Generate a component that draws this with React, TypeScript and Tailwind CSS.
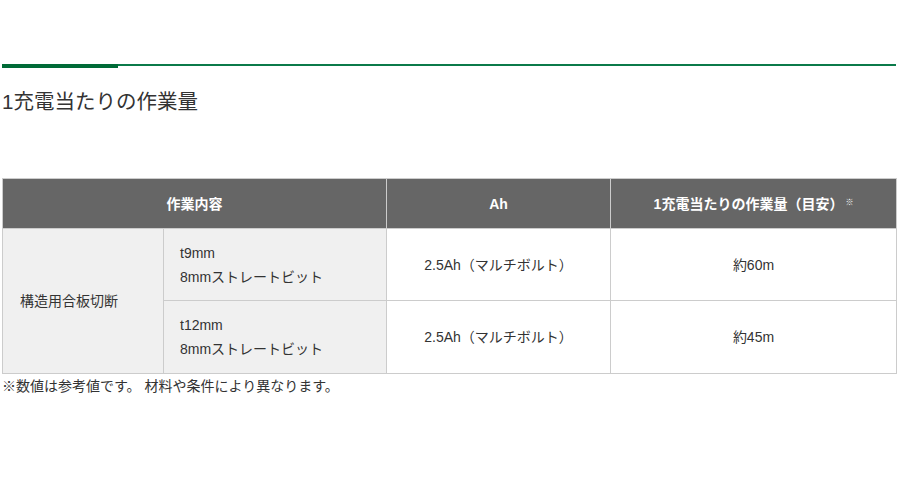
const font = {
  fontFamily: '"Liberation Sans", "Noto Sans CJK JP", sans-serif',
};

export default function App() {
  return (
    <div
      className="h-[483px] w-[900px] bg-white pl-[2px] pr-[4px] pt-[64px] text-[#333]"
      style={font}
    >
      <div className="relative h-[4px]">
        <div className="h-[2px] w-full bg-[#0b7a4a]" />
        <div className="absolute left-0 top-0 h-[4px] w-[116px] bg-[#006b37]" />
      </div>

      <h2 className="mt-[18px] text-[20.5px] leading-[32px] font-normal text-[#333]">
        1充電当たりの作業量
      </h2>

      <table className="mt-[60px] w-[895px] border-collapse text-[14px] leading-[24px]">
        <thead>
          <tr className="h-[50px] bg-[#666] text-white">
            <th colSpan={2} className="border border-[#ccc] font-bold">
              作業内容
            </th>
            <th className="w-[224px] border border-[#ccc] font-bold">Ah</th>
            <th className="w-[286px] border border-[#ccc] font-bold">
              1充電当たりの作業量（目安）
              <sup className="ml-[2px] text-[8px] font-normal">※</sup>
            </th>
          </tr>
        </thead>
        <tbody>
          <tr className="h-[72px]">
            <td
              rowSpan={2}
              className="w-[161px] border border-[#ccc] bg-[#f0f0f0] pl-[17px] text-left"
            >
              構造用合板切断
            </td>
            <td className="w-[223px] border border-[#ccc] bg-[#f0f0f0] pl-[16px] text-left">
              t9mm
              <br />
              8mmストレートビット
            </td>
            <td className="border border-[#ccc] text-center">2.5Ah（マルチボルト）</td>
            <td className="border border-[#ccc] text-center">約60m</td>
          </tr>
          <tr className="h-[73px]">
            <td className="border border-[#ccc] bg-[#f0f0f0] pl-[16px] text-left">
              t12mm
              <br />
              8mmストレートビット
            </td>
            <td className="border border-[#ccc] text-center">2.5Ah（マルチボルト）</td>
            <td className="border border-[#ccc] text-center">約45m</td>
          </tr>
        </tbody>
      </table>

      <p className="text-[14px] leading-[24px]">※数値は参考値です。 材料や条件により異なります。</p>
    </div>
  );
}
